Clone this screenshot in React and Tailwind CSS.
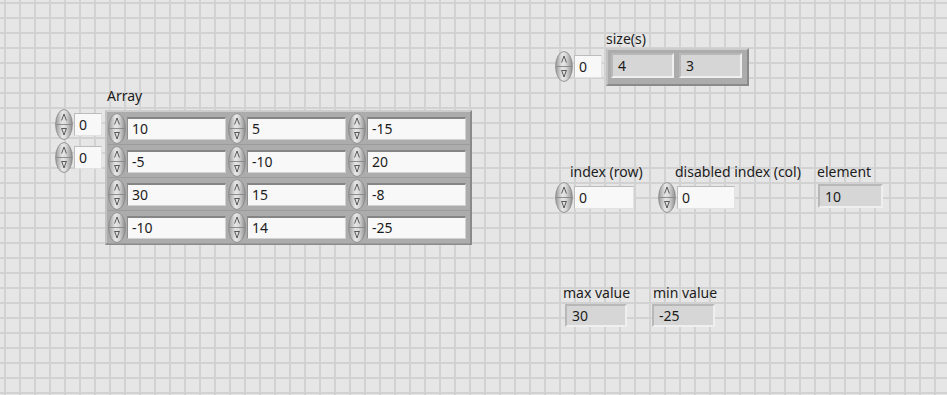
import React from 'react';

function Spinner() {
  return (
    <svg width="18" height="31" viewBox="0 0 18 31" className="shrink-0">
      <defs>
        <linearGradient id="spinFill" x1="0" x2="1" y1="0" y2="0">
          <stop offset="0" stopColor="#999999" />
          <stop offset="0.4" stopColor="#e6e6e6" />
          <stop offset="0.6" stopColor="#dadada" />
          <stop offset="1" stopColor="#8e8e8e" />
        </linearGradient>
      </defs>
      <ellipse cx="9" cy="15.5" rx="8.4" ry="15" fill="url(#spinFill)" stroke="#858585" strokeWidth="0.8" />
      <line x1="1.5" y1="15.5" x2="16.5" y2="15.5" stroke="#858585" strokeWidth="0.9" />
      <path d="M6.6 11.5 L9 5 L11.4 11.5" fill="none" stroke="#4a4a4a" strokeWidth="0.9" />
      <path d="M6.3 19.5 H11.7 M6.8 19.8 L9 26 L11.2 19.8" fill="none" stroke="#4a4a4a" strokeWidth="0.9" />
    </svg>
  );
}

// white numeric control box
function Box({ className, value }) {
  return (
    <div
      className={
        'flex items-center pl-[4px] bg-[#f8f8f8] border-t border-l border-t-[#bcbcbc] border-l-[#bcbcbc] border-b border-r border-b-[#e2e2e2] border-r-[#e2e2e2] ' +
        className
      }
    >
      {value}
    </div>
  );
}

// gray indicator box
function Ind({ className, value }) {
  return (
    <div
      className={
        'flex items-center pl-[5px] bg-[#d6d6d6] border-t-2 border-l-2 border-t-[#b8b8b8] border-l-[#b8b8b8] border-b-2 border-r-2 border-b-[#efefef] border-r-[#efefef] ' +
        className
      }
    >
      {value}
    </div>
  );
}

const rows = [
  ['10', '5', '-15'],
  ['-5', '-10', '20'],
  ['30', '15', '-8'],
  ['-10', '14', '-25'],
];

export default function App() {
  return (
    <div className="w-[947px] h-[395px] overflow-hidden flex bg-[#e6e6e6] bg-[linear-gradient(to_right,#d2d2d2_2px,transparent_2px),linear-gradient(to_bottom,#d2d2d2_2px,transparent_2px)] bg-size-[15px_15px] bg-position-[4px_2px] font-['Noto_Sans',sans-serif] text-[14px] text-[#1c1c1c]">
      {/* Array */}
      <div className="pl-[55px] pt-[87px] shrink-0">
        <div className="ml-[52px] h-[17px] leading-[17px]">Array</div>
        <div className="flex mt-[6px]">
          <div className="w-[50px] flex flex-col mt-[-2px]">
            {[0, 1].map((i) => (
              <div key={i} className="h-[33px] flex items-center gap-[1px]">
                <Spinner />
                <Box className="w-[28px] h-[23px]" value="0" />
              </div>
            ))}
          </div>
          <div className="w-[367px] h-[135px] bg-[#acacac] border-2 border-t-[#cdcdcd] border-l-[#c2c2c2] border-b-[#8a8a8a] border-r-[#8a8a8a] pl-[1px]">
            {rows.map((r, i) => (
              <div key={i} className="h-[33px] flex border-b border-b-[#9c9c9c]">
                {r.map((v, j) => (
                  <div key={j} className="w-[120px] flex items-center gap-[1px]">
                    <Spinner />
                    <div className="w-[99px] h-[23px] flex items-center pl-[4px] bg-[#f8f8f8] border-t-2 border-l border-t-[#858585] border-l-[#8f8f8f] border-b border-r border-b-[#d2d2d2] border-r-[#d2d2d2]">
                      {v}
                    </div>
                  </div>
                ))}
              </div>
            ))}
          </div>
        </div>
      </div>

      {/* right side */}
      <div className="ml-[81px] flex flex-col">
        {/* size(s) */}
        <div className="flex pt-[30px]">
          <div className="ml-[2px] mt-[17px] flex items-center gap-[1px]">
            <Spinner />
            <Box className="w-[28px] h-[23px]" value="0" />
          </div>
          <div className="ml-[4px]">
            <div className="h-[17px] leading-[17px]">size(s)</div>
            <div className="mt-[1px] w-[143px] h-[38px] flex gap-[5px] pl-[3px] pt-[3px] bg-[#acacac] border-2 border-t-[#cdcdcd] border-l-[#c2c2c2] border-b-[#8a8a8a] border-r-[#8a8a8a]">
              <Ind className="w-[63px] h-[25px]" value="4" />
              <Ind className="w-[63px] h-[25px]" value="3" />
            </div>
          </div>
        </div>

        {/* index / element */}
        <div className="flex mt-[77px]">
          <div className="w-[103px] ml-[2px]">
            <div className="ml-[15px] h-[17px] leading-[17px] whitespace-nowrap">index (row)</div>
            <div className="mt-[2px] flex items-center gap-[1px]">
              <Spinner />
              <Box className="w-[60px] h-[23px]" value="0" />
            </div>
          </div>
          <div className="w-[159px]">
            <div className="ml-[17px] h-[17px] leading-[17px] whitespace-nowrap">disabled index (col)</div>
            <div className="mt-[2px] flex items-center gap-[1px]">
              <Spinner />
              <Box className="w-[58px] h-[23px]" value="0" />
            </div>
          </div>
          <div>
            <div className="h-[17px] leading-[17px]">element</div>
            <Ind className="mt-[4px] ml-[1px] w-[65px] h-[24px]" value="10" />
          </div>
        </div>

        {/* max / min */}
        <div className="flex mt-[71px] ml-[10px]">
          <div className="w-[89px]">
            <div className="h-[17px] leading-[17px]">max value</div>
            <Ind className="mt-[3px] ml-[2px] w-[62px] h-[23px]" value="30" />
          </div>
          <div>
            <div className="ml-[1px] h-[17px] leading-[17px]">min value</div>
            <Ind className="mt-[3px] w-[63px] h-[23px]" value="-25" />
          </div>
        </div>
      </div>
    </div>
  );
}
